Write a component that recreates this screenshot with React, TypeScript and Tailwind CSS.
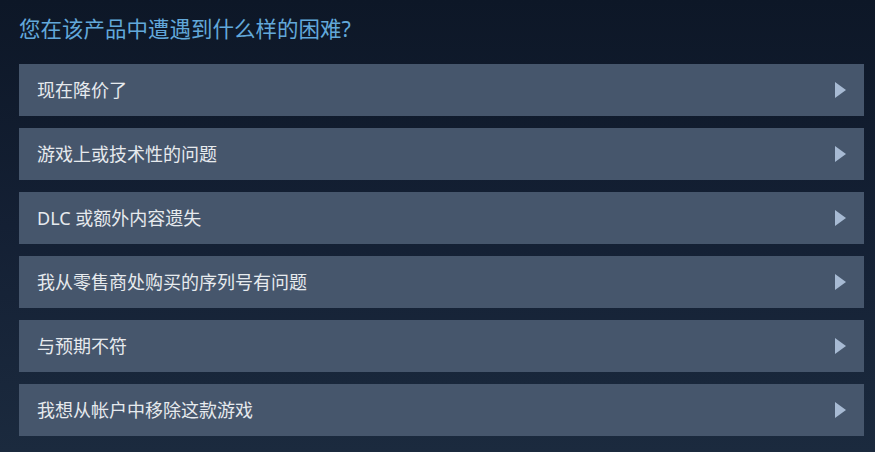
import { useState } from 'react'

const options = [
  '现在降价了',
  '游戏上或技术性的问题',
  'DLC 或额外内容遗失',
  '我从零售商处购买的序列号有问题',
  '与预期不符',
  '我想从帐户中移除这款游戏',
]

function Arrow() {
  return (
    <svg width="11" height="16" viewBox="0 0 11 16" className="shrink-0">
      <polygon points="0,0 11,8 0,16" fill="#a7bad3" />
    </svg>
  )
}

export default function App() {
  const [picked, setPicked] = useState<number | null>(null)

  return (
    <div
      className="min-h-screen w-full bg-gradient-to-b from-[#0d1727] via-[#142034] to-[#1b2a3e] pl-[19px] pr-[11px] pt-[13px]"
      style={{ fontFamily: '"Noto Sans", "Noto Sans CJK SC", sans-serif' }}
    >
      <h2 className="text-[21.5px] leading-[32px] text-[#62a8da] font-normal mb-[19px]">
        您在该产品中遭遇到什么样的困难?
      </h2>

      <div className="flex flex-col gap-[12px]">
        {options.map((label, i) => (
          <button
            key={label}
            onClick={() => setPicked(i)}
            className={`flex h-[52px] w-full items-center justify-between pl-[18px] pr-[18px] text-left text-[18px] text-[#e6eaee] ${
              picked === i ? 'bg-[#4f6180]' : 'bg-[#46566c]'
            } hover:bg-[#4f6180]`}
          >
            <span>{label}</span>
            <Arrow />
          </button>
        ))}
      </div>
    </div>
  )
}
